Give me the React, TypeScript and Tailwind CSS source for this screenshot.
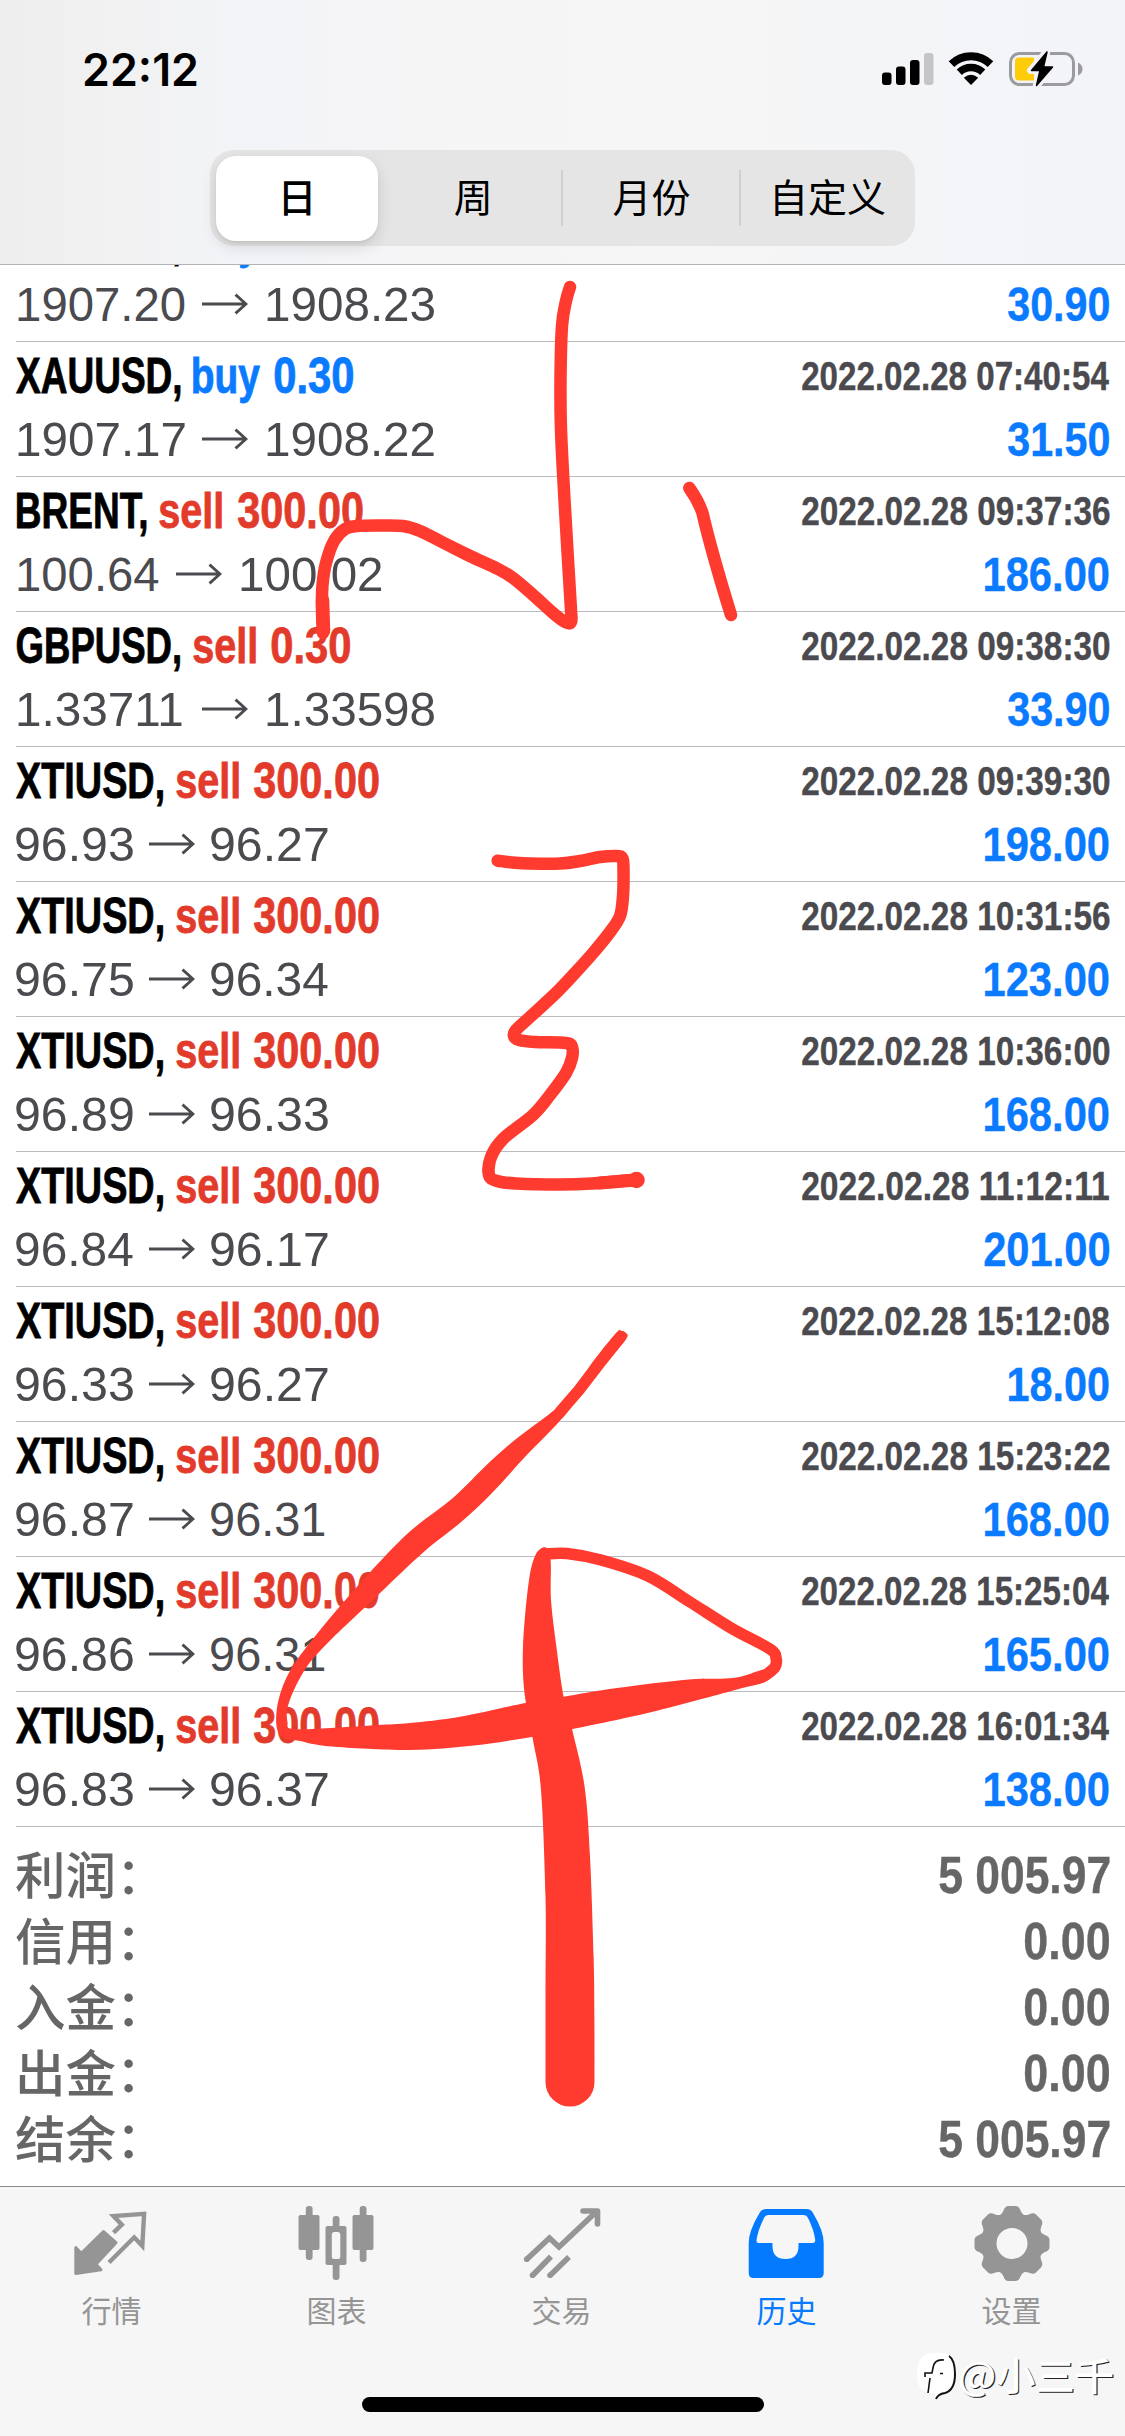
import { useLayoutEffect, useRef, useState } from "react";

type Pt = [number, number];

/** Catmull-Rom spline through the points, as an SVG path. */
function smooth(p: Pt[], closed = false): string {
  const n = p.length;
  const at = (i: number) => (closed ? p[(i + n) % n] : p[Math.max(0, Math.min(n - 1, i))]);
  let d = `M${p[0][0]} ${p[0][1]}`;
  for (let i = 0; i < (closed ? n : n - 1); i++) {
    const [a, b, c, e] = [at(i - 1), at(i), at(i + 1), at(i + 2)];
    d += `C${b[0] + (c[0] - a[0]) / 6} ${b[1] + (c[1] - a[1]) / 6} ${c[0] - (e[0] - b[0]) / 6} ${c[1] - (e[1] - b[1]) / 6} ${c[0]} ${c[1]}`;
  }
  return closed ? d + "Z" : d;
}

/** Condensed text: squeezes its glyphs so that they fill exactly `w` pixels. */
function Fit({ text, w, className = "" }: { text: string; w: number; className?: string }) {
  const ref = useRef<HTMLSpanElement>(null);
  const [tf, setTf] = useState("none");
  useLayoutEffect(() => {
    const el = ref.current;
    const ctx = document.createElement("canvas").getContext("2d");
    if (!el || !ctx) return;
    const cs = getComputedStyle(el);
    ctx.font = `${cs.fontWeight} ${cs.fontSize} ${cs.fontFamily}`;
    const m = ctx.measureText(text);
    const s = w / (m.actualBoundingBoxLeft + m.actualBoundingBoxRight);
    setTf(`translateX(${m.actualBoundingBoxLeft * s}px) scaleX(${s})`);
  }, [text, w]);
  return (
    <span className={`block shrink-0 whitespace-nowrap ${className}`} style={{ width: w }}>
      <span ref={ref} className="inline-block origin-left" style={{ transform: tf }}>
        {text}
      </span>
    </span>
  );
}

const symbolBox: Record<string, [number, number]> = {
  XAUUSD: [0, 164.5],
  BRENT: [1, 129.5],
  GBPUSD: [1, 163],
  XTIUSD: [0, 147],
};

type Deal = { s: string; side: "buy" | "sell"; vol: string; from: string; to: string; time: string; profit: string };

const deal = (s: string, side: "buy" | "sell", vol: string, from: string, to: string, time: string, profit: string): Deal => ({
  s, side, vol, from, to, time: "2022.02.28 " + time, profit,
});

const deals: Deal[] = [
  deal("XAUUSD", "buy", "0.30", "1907.20", "1908.23", "07:40:52", "30.90"),
  deal("XAUUSD", "buy", "0.30", "1907.17", "1908.22", "07:40:54", "31.50"),
  deal("BRENT", "sell", "300.00", "100.64", "100.02", "09:37:36", "186.00"),
  deal("GBPUSD", "sell", "0.30", "1.33711", "1.33598", "09:38:30", "33.90"),
  deal("XTIUSD", "sell", "300.00", "96.93", "96.27", "09:39:30", "198.00"),
  deal("XTIUSD", "sell", "300.00", "96.75", "96.34", "10:31:56", "123.00"),
  deal("XTIUSD", "sell", "300.00", "96.89", "96.33", "10:36:00", "168.00"),
  deal("XTIUSD", "sell", "300.00", "96.84", "96.17", "11:12:11", "201.00"),
  deal("XTIUSD", "sell", "300.00", "96.33", "96.27", "15:12:08", "18.00"),
  deal("XTIUSD", "sell", "300.00", "96.87", "96.31", "15:23:22", "168.00"),
  deal("XTIUSD", "sell", "300.00", "96.86", "96.31", "15:25:04", "165.00"),
  deal("XTIUSD", "sell", "300.00", "96.83", "96.37", "16:01:34", "138.00"),
];

/** Ink width of a price: a leading or trailing "1" is narrower than other digits. */
const priceWidth = (t: string) => {
  const full = t.length === 7 ? 169.5 : t.length === 6 ? 143 : 116.8;
  return full - (t.startsWith("1") ? 2.4 : 0) - (t.endsWith("1") ? 3.3 : 0);
};
const priceSlot = (t: string) => (t.length === 7 ? 186 : t.length === 6 ? 160 : 133);

function profitWidth(t: string) {
  const full = t.length === 6 ? 125.5 : 101.5;
  return full - (t.startsWith("1") ? 1.5 : 0);
}

function Row({ d }: { d: Deal }) {
  const [off, w] = symbolBox[d.s];
  const tone = d.side === "buy" ? "text-[#0a7aff]" : "text-[#e23b2b]";
  const volW = d.vol.length === 6 ? 124.5 : 79;
  return (
    <div className="ml-4 h-[135px] border-b border-[#bcbbc0] pr-4 pt-[5px]">
      <div className="flex h-[60px] justify-between font-bold">
        <div className="flex text-[50px] leading-[59px] [-webkit-text-stroke:0.8px]">
          <span className="block" style={{ width: off }} />
          <Fit text={d.s + ","} w={w} className="text-black" />
          <Fit text={d.side} w={d.side === "buy" ? 67 : 63} className={`ml-[12.500px] ${tone}`} />
          <Fit text={d.vol} w={volW} className={`${d.side === "buy" ? "ml-[13.5px]" : "ml-[15.5px]"} ${tone}`} />
        </div>
        <Fit text={d.time} w={307.5} className="text-[40px] leading-[58px] text-[#4a4a4f] [-webkit-text-stroke:0.4px]" />
      </div>
      <div className="mt-[2px] flex h-[60px] justify-between leading-[60px]">
        <div className="flex items-start text-[48.500px] text-[#4a4a4f]">
          <span className="block shrink-0" style={{ width: d.from.startsWith("1") ? 2.4 : 0.4 }} />
          <Fit text={d.from} w={priceWidth(d.from)} />
          <svg
            className="mt-[19px] h-[22px] w-[46px] shrink-0"
            style={{ marginLeft: priceSlot(d.from) - (d.from.startsWith("1") ? 18.6 : 16.4) - priceWidth(d.from) + 16 }}
            viewBox="0 0 46 22"
            fill="none"
            stroke="currentColor"
            strokeWidth="2.8"
          >
            <path d="M0 11H44M33.500 1.600L44 11L33.500 20.400" />
          </svg>
          <Fit text={d.to} w={priceWidth(d.to)} className={d.to.startsWith("1") ? "ml-[19px]" : "ml-[16px]"} />
        </div>
        <Fit text={d.profit} w={profitWidth(d.profit)} className="text-[49px] font-bold text-[#0a7aff] [-webkit-text-stroke:0.4px]" />
      </div>
    </div>
  );
}

const totals = [
  ["利润：", "5 005.97"],
  ["信用：", "0.00"],
  ["入金：", "0.00"],
  ["出金：", "0.00"],
  ["结余：", "5 005.97"],
];

function StatusIcons() {
  return (
    <svg className="h-10 w-[205px]" viewBox="880 49 205 40">
      <rect x="882" y="72.5" width="9.5" height="12.5" rx="3" />
      <rect x="896" y="66.5" width="9.5" height="18.5" rx="3" />
      <rect x="910" y="60" width="9.5" height="25" rx="3" />
      <rect x="924" y="53" width="9.5" height="32" rx="3" fill="#c5c5c7" />
      <g fill="none" stroke="#000">
        <path d="M951.5 64.2A28 28 0 0 1 990.5 64.2" strokeWidth="8" />
        <path d="M959.3 72.2A17 17 0 0 1 982.7 72.2" strokeWidth="7.5" />
      </g>
      <path d="M971 85L963.8 77.8Q971 71.5 978.2 77.8Z" />
      <rect x="1010.5" y="53.5" width="63" height="31" rx="9" fill="none" stroke="#9b9b9f" strokeWidth="3" />
      <path d="M1078 62.5Q1082.5 64.5 1082.5 69T1078 75.5Z" fill="#9b9b9f" />
      <path d="M1019 57.5H1034V80.5H1019Q1015 80.5 1015 76.5V61.5Q1015 57.5 1019 57.5Z" fill="#ffcc0a" />
      <path
        d="M1047 51L1030.5 70.5H1040L1036 86.5L1053.5 67H1043.5Z"
        fill="#f4f4f8"
        stroke="#f4f4f8"
        strokeWidth="7"
        strokeLinejoin="round"
      />
      <path d="M1047 52L1031.5 70.5H1040L1036.5 85.5L1052.5 67H1043.5Z" stroke="#000" strokeWidth="1.5" strokeLinejoin="round" />
    </svg>
  );
}

function Quotes() {
  return (
    <svg className="h-20 w-20" viewBox="72.5 2203 80 80">
      <path
        d="M104 2231.5L116.5 2242.7L96.5 2264.3L101.5 2269.8L76.3 2273.5V2247.5L81.8 2253.3Z"
        fill="currentColor"
        stroke="currentColor"
        strokeWidth="3"
        strokeLinejoin="round"
      />
      <path
        d="M114 2232.7L122.3 2224.7L114 2216L144.6 2213.8L142.8 2246L134.7 2237.3L109.5 2262.5"
        fill="none"
        stroke="currentColor"
        strokeWidth="4.4"
      />
    </svg>
  );
}

function Candles() {
  return (
    <svg className="h-20 w-20" viewBox="297.5 2203 80 80" fill="currentColor">
      <rect x="299" y="2215" width="21" height="35" rx="2" />
      <rect x="306.3" y="2206" width="6.8" height="54" rx="3" />
      <rect x="353" y="2215" width="21" height="35" rx="2" />
      <rect x="360.2" y="2206" width="6.8" height="56" rx="3" />
      <rect x="333.2" y="2216" width="6.8" height="16" rx="3" />
      <rect x="333.2" y="2260" width="6.8" height="20" rx="3" />
      <path
        fillRule="evenodd"
        d="M328 2226H345Q347 2226 347 2228V2263Q347 2265 345 2265H328Q326 2265 326 2263V2228Q326 2226 328 2226ZM334.5 2232Q332.3 2232 332.3 2234.5V2257Q332.3 2259 334.5 2259H338.6Q340.8 2259 340.8 2257V2234.5Q340.8 2232 338.6 2232Z"
      />
    </svg>
  );
}

function Trade() {
  return (
    <svg className="h-20 w-20" viewBox="522.5 2203 80 80" fill="none" stroke="currentColor" strokeWidth="5.6">
      <path d="M527 2259.5L550 2238L559.5 2247L596 2212.5" />
      <path d="M583.5 2211H598V2224" strokeLinecap="round" strokeLinejoin="round" />
      <path d="M533 2275.5L551.5 2256.5M550.5 2275.5L569.5 2257" />
      <g fill="currentColor" stroke="none">
        <circle cx="527.2" cy="2259.3" r="2.8" />
        <circle cx="533" cy="2275.3" r="2.8" />
        <circle cx="550.5" cy="2275.3" r="2.8" />
      </g>
    </svg>
  );
}

function History() {
  return (
    <svg className="h-20 w-20" viewBox="747.5 2203 80 80" fill="currentColor">
      <path
        fillRule="evenodd"
        d="M767 2209H807Q811.500 2209 813.500 2213Q824.200 2231 824.200 2243V2273Q824.200 2278 819.500 2278H754Q749.200 2278 749.200 2273V2243Q749.200 2231 760 2213Q762 2209 767 2209ZM769 2215Q766 2215 764.500 2218Q758.500 2230 757 2240Q756.700 2243 759 2243H773V2246Q773 2259 786 2259Q799 2259 799 2246V2243H813.500Q816 2243 815.700 2240Q814.500 2230 808.500 2218Q807 2215 804 2215Z"
      />
    </svg>
  );
}

function Gear() {
  const teeth = Array.from({ length: 8 }, (_, i) => i * 45);
  return (
    <svg className="h-20 w-20" viewBox="-40 -40.500 80 80">
      <circle r="23" fill="none" stroke="currentColor" strokeWidth="15" />
      {teeth.map((a) => (
        <path
          key={a}
          transform={`rotate(${a})`}
          d="M-14 -27.500Q-10 -29 -8.500 -33Q-7 -37.500 -3.500 -37.500H3.500Q7 -37.500 8.500 -33Q10 -29 14 -27.500V-22H-14Z"
          fill="currentColor"
        />
      ))}
    </svg>
  );
}

const tabs = [
  { label: "行情", Icon: Quotes, color: "text-[#959595]" },
  { label: "图表", Icon: Candles, color: "text-[#959595]" },
  { label: "交易", Icon: Trade, color: "text-[#959595]" },
  { label: "历史", Icon: History, color: "text-[#047aff]" },
  { label: "设置", Icon: Gear, color: "text-[#959595]" },
];

const hook: Pt[] = [
  [570, 287], [566, 301], [562, 326], [560.5, 380], [561, 430], [564.5, 500], [568, 560], [571, 610], [571, 622], [565, 622],
  [553, 613], [532, 594], [513, 578], [498, 569], [470, 556], [446, 544], [420, 531], [403, 526], [380, 525.5], [357, 526],
  [345, 529], [334, 541], [326, 563], [322.500, 585], [322, 610], [323, 633],
];
const three: Pt[] = [
  [497.7, 860.7], [515, 862.7], [530, 863.5], [560, 863.5], [580, 861], [600, 857], [617, 856], [622.5, 858.5], [623.5, 870],
  [623, 896], [620, 916], [610, 932], [593, 953], [575, 973], [556, 993], [530, 1017], [516, 1030], [514, 1036], [519, 1040],
  [535, 1042], [566, 1043], [572, 1047], [572, 1058], [566, 1073], [550, 1095], [533, 1115], [503, 1139], [491, 1157],
  [489, 1175], [497, 1181], [516, 1183.5], [560, 1184.5], [592, 1183.5], [632, 1180],
];
const fourBand: Pt[] = [
  [617, 1332], [595.7, 1358], [574.3, 1388], [556.4, 1408.3], [517, 1438.3], [488.6, 1463], [452.9, 1498], [413.6, 1528.3],
  [381.4, 1560], [343.9, 1601.7], [313.6, 1638], [290.4, 1670], [278.5, 1700], [276.5, 1726], [284, 1738], [300, 1741],
  [331.4, 1746.5], [410, 1750], [474, 1745.5], [533, 1736.7], [572.5, 1729], [652.9, 1711.7], [735, 1690], [767, 1681],
  [767, 1669], [735, 1677.7], [688.6, 1679.500], [617, 1688], [563.6, 1696.7], [525.4, 1703], [460, 1716.7], [410, 1723],
  [378, 1725], [335, 1727.7], [293, 1729], [287.500, 1722], [288.5, 1704], [302.9, 1673], [324, 1646.7], [377.9, 1595],
  [424, 1551.7], [460, 1523], [492, 1493], [524, 1458], [563.6, 1416.7], [583, 1390], [605, 1363], [626, 1339], [626, 1333], [621, 1331],
];
const fourLoop: Pt[] = [
  [545, 1554], [567, 1553.5], [601, 1560], [648, 1576], [690, 1602], [731, 1628], [770, 1649], [776, 1658], [775, 1667], [766, 1675],
];
/* Runs from the lower right corner up, over the top and down to the lower left corner. */
const fourStem: Pt[] = [
  [594.5, 2082], [594.4, 2020], [593.6, 1956.7], [590, 1856.7], [584.6, 1786.7], [572, 1729], [563.6, 1696.7], [556.4, 1646.7],
  [551, 1600], [550.6, 1560], [545.7, 1547.500], [535.500, 1555], [528.6, 1583], [523, 1646.7], [524.500, 1693], [533, 1740],
  [541, 1790], [545.5, 1896.7], [545.5, 1990], [545.5, 2082],
];

export default function App() {
  return (
    <div className="relative flex h-[2436px] w-[1125px] flex-col overflow-hidden bg-white font-['Liberation_Sans','Noto_Sans_CJK_SC',sans-serif]">
      <header className="z-10 h-[265px] shrink-0 border-b border-[#b2b2b7] bg-[linear-gradient(90deg,#eeeeee_0%,#f1f1f1_9%,#f3f4f8_22%,#f5f5f6_38%,#f6f6f6_60%,#f4f5f7_80%,#f3f4fa_100%)]">
        <div className="flex h-[150px] items-start justify-between pl-[84px] pr-10 pt-[49px]">
          <Fit text="22:12" w={113} className="font-['Inter',sans-serif] text-[45px] font-semibold leading-[41px] text-black" />
          <StatusIcons />
        </div>
        <div className="mx-auto flex h-24 w-[705px] items-center rounded-[24px] bg-[#e5e5e6] pl-[6px] text-[39px] leading-none text-black">
          <div className="flex h-[85px] w-[162px] items-center justify-center rounded-[20px] bg-white font-medium shadow-[0_6px_16px_rgba(0,0,0,0.12),0_2px_3px_rgba(0,0,0,0.06)]">
            日
          </div>
          <div className="flex h-[56px] w-[184.500px] items-center justify-center border-r-2 border-[#cfcfd1] pl-2">周</div>
          <div className="flex h-[56px] w-[178px] items-center justify-center border-r-2 border-[#cfcfd1] pl-0.5">月份</div>
          <div className="flex h-[56px] w-[174px] items-center justify-center">自定义</div>
        </div>
      </header>

      <main className="flex h-[1921px] shrink-0 flex-col overflow-hidden">
        <div className="-mt-[58px]">
          {deals.map((d, i) => (
            <Row key={i} d={d} />
          ))}
        </div>
        <div className="flex flex-col pl-[15px] pr-4 pt-3 text-[#666]">
          {totals.map(([k, v]) => (
            <div key={k} className="flex h-[66px] items-start justify-between leading-[66px]">
              <span className="font-['Noto_Sans_CJK_SC',sans-serif] text-[50.500px] font-medium">{k}</span>
              <Fit text={v} w={v.length > 4 ? 170.5 : 84} className="text-[52px] font-bold leading-[72px] [-webkit-text-stroke:0.4px]" />
            </div>
          ))}
        </div>
      </main>

      <footer className="flex flex-1 flex-col border-t border-[#8b8b8b] bg-[#f6f6f6]">
        <nav className="-ml-[1px] flex h-[210px] pt-4">
          {tabs.map(({ label, Icon, color }) => (
            <div key={label} className={`flex w-[225px] shrink-0 flex-col items-center ${color}`}>
              <Icon />
              <span className="mt-[5px] font-['Noto_Sans_CJK_SC',sans-serif] text-[30px] leading-[42px]">{label}</span>
            </div>
          ))}
        </nav>
        <div className="mx-auto h-[15px] w-[402px] rounded-full bg-black" />
      </footer>

      <div className="absolute bottom-[36px] right-[12px] flex items-center">
        <svg className="h-12 w-[44px]" viewBox="0 0 44 48" fill="none">
          <path d="M14 1H27Q40 3 40 20Q40 40 24 41L20 47L19 41H12Q1 38 1 22Q1 3 14 1Z" fill="#fff" />
          <path d="M28 8Q18 7 17 16L16 21H9V25M14 26L12 41M24 21.500H27" stroke="#111" strokeWidth="1.600" />
          <path d="M33 4Q39 8 39 22Q39 38 29 41Q22 42 20 47" stroke="#111" strokeWidth="2" />
        </svg>
        <Fit
          text="@小三千"
          w={153}
          className="mt-[-4px] font-['Noto_Sans_CJK_SC',sans-serif] text-[38px] font-medium leading-[48px] text-white [text-shadow:1.200px_1.200px_0.500px_#222]"
        />
      </div>

      <svg className="pointer-events-none absolute inset-0 z-20 h-[2436px] w-[1125px]" viewBox="0 0 1125 2436" fill="none">
        <g stroke="#ff3b30" strokeLinecap="round" strokeLinejoin="round" strokeWidth="12.500">
          <path d={smooth(hook)} />
          <path d="M322.500 600L323.500 631" strokeWidth="13.500" />
          <path d="M689.300 488Q698 500 702.500 513Q711 550 731 615" />
          <path d={smooth(three)} />
          <path d="M600 1183L636 1180" strokeWidth="13" />
          <circle cx="636.500" cy="1180" r="2" />
          <path d={smooth(fourLoop)} strokeWidth="11.500" />
          <path d="M621 1336.500Q600 1362 579 1390L560 1412" strokeWidth="11.500" />
        </g>
        <path d={smooth(fourBand, true)} fill="#ff3b30" />
        <path d={smooth(fourStem) + "A24.5 24.5 0 0 0 594.5 2082Z"} fill="#ff3b30" />
      </svg>
    </div>
  );
}
